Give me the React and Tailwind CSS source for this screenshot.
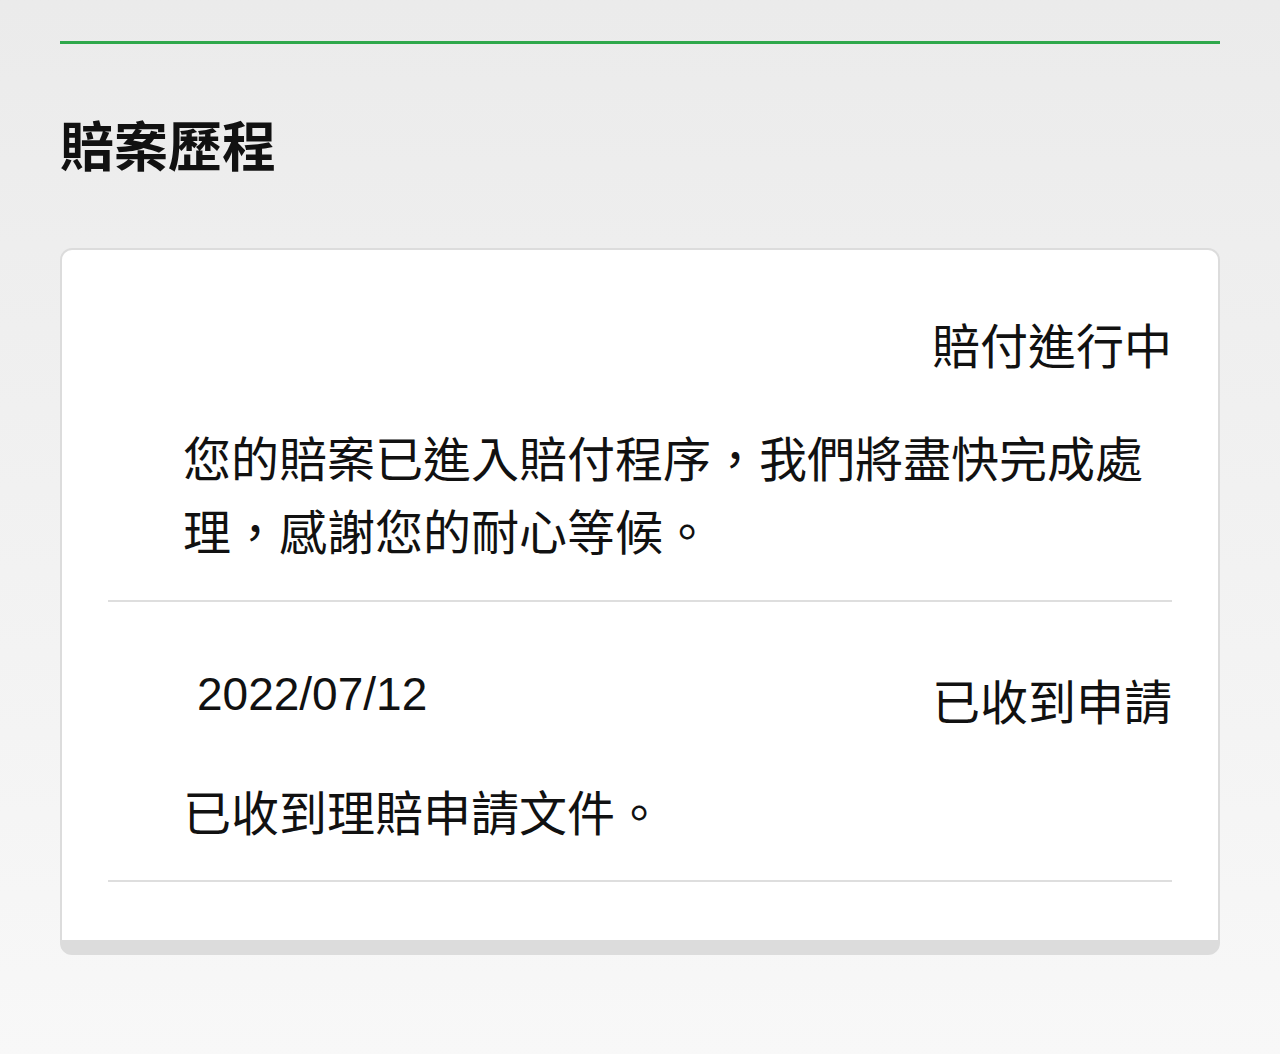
const CJK = { fontFamily: '"Noto Sans CJK TC", "Noto Sans", sans-serif' };

const steps = [
  {
    date: "",
    status: "賠付進行中",
    note: "您的賠案已進入賠付程序，我們將盡快完成處理，感謝您的耐心等候。",
    gap: "mt-[40px]",
    pad: "pt-[57px] pb-[34px]",
  },
  {
    date: "2022/07/12",
    status: "已收到申請",
    note: "已收到理賠申請文件。",
    gap: "mt-[38px]",
    pad: "pt-[61px] pb-[33px]",
  },
];

export default function App() {
  return (
    <div
      className="min-h-screen bg-gradient-to-b from-[#ebebeb] to-[#f8f8f8] px-[60px] pt-[41px] pb-[100px] text-[#111]"
      style={CJK}
    >
      <div className="h-[3px] bg-[#2fa84b]" />

      <h1 className="mt-[73px] text-[54px] font-bold leading-none">賠案歷程</h1>

      <section className="mt-[77px] rounded-[12px] border-2 border-b-[15px] border-[#dcdcdc] bg-white px-[46px] pb-[58px]">
        {steps.map((s) => (
          <Step key={s.status} {...s} />
        ))}
      </section>
    </div>
  );
}

function Step({ date, status, note, gap, pad }) {
  return (
    <div className={`border-b-2 border-[#dedede] ${pad}`}>
      <div className="flex items-start justify-between">
        <span
          className="pl-[89px] text-[46px] leading-[63px]"
          style={{ fontFamily: '"Liberation Sans", Arial, sans-serif' }}
        >
          {date}
        </span>
        <span className="text-[48px] leading-[73px]">{status}</span>
      </div>
      <p className={`${gap} pl-[75px] text-[48px] leading-[73px]`}>{note}</p>
    </div>
  );
}
